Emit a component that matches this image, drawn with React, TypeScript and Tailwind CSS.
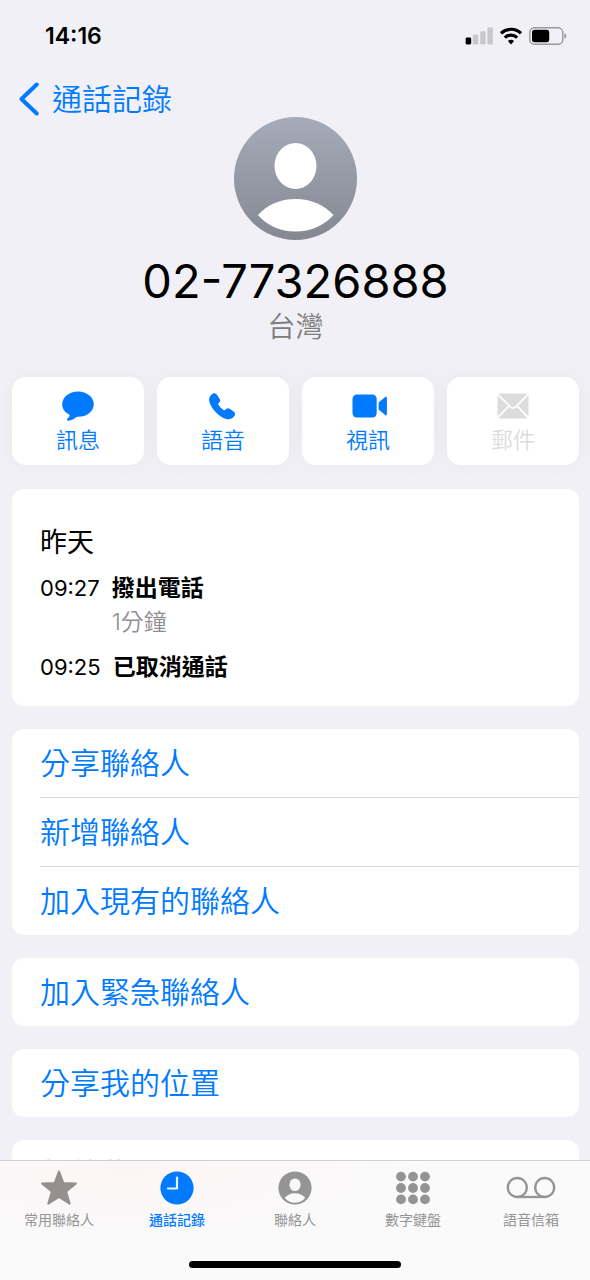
import { ReactNode } from 'react';

interface CallRecord {
  time: string;
  title: string;
  duration?: string;
}

const calls: CallRecord[] = [
  { time: '09:27', title: '撥出電話', duration: '1分鐘' },
  { time: '09:25', title: '已取消通話' },
];

const linkGroups = [
  ['分享聯絡人', '新增聯絡人', '加入現有的聯絡人'],
  ['加入緊急聯絡人'],
  ['分享我的位置'],
];

function StatusBar() {
  return (
    <div className="flex h-[72px] shrink-0 items-center justify-between pl-[45px] pr-[23px]">
      <span className="text-[23px] leading-7 font-semibold">14:16</span>
      <div className="flex items-center gap-[7px]">
        <svg width="28" height="18" viewBox="0 0 28 18" aria-hidden="true">
          <rect x="0.6" y="10.5" width="5.6" height="7" rx="1.4" fill="#000" />
          <rect x="7.8" y="7.5" width="5.4" height="10" rx="1.4" fill="#c8c7cc" />
          <rect x="15.2" y="4.3" width="5.4" height="13.2" rx="1.4" fill="#c8c7cc" />
          <rect x="22.4" y="0.4" width="5.4" height="17.1" rx="1.4" fill="#c8c7cc" />
        </svg>
        <svg width="22" height="18" viewBox="0 0 22 18" fill="none" stroke="#000" aria-hidden="true">
          <path d="M1 6.3a14.4 14.4 0 0 1 20 0" strokeWidth="3.2" />
          <path d="M4.8 10.6a9 9 0 0 1 12.4 0" strokeWidth="3.1" />
          <path d="M11 17.4l-3.1-3.3a4.6 4.6 0 0 1 6.2 0z" fill="#000" stroke="none" />
        </svg>
        <svg width="38" height="18" viewBox="0 0 38 18" aria-hidden="true">
          <rect x="0.8" y="0.8" width="33" height="16.4" rx="4.6" fill="none" stroke="#98979c" strokeWidth="1.4" />
          <rect x="3" y="2.8" width="17.2" height="12.4" rx="2.6" fill="#000" />
          <path d="M35.4 6.2c2.6 1 2.6 4.6 0 5.6z" fill="#98979c" />
        </svg>
      </div>
    </div>
  );
}

function Avatar() {
  return (
    <svg width="123" height="123" viewBox="0 0 123 123" role="img" aria-label="聯絡人">
      <defs>
        <linearGradient id="avatar-fill" x1="0" y1="0" x2="0" y2="1">
          <stop offset="0" stopColor="#a5abb9" />
          <stop offset="1" stopColor="#848891" />
        </linearGradient>
      </defs>
      <circle cx="61.5" cy="61.5" r="61.5" fill="url(#avatar-fill)" />
      <ellipse cx="61.5" cy="49" rx="21" ry="23" fill="#fff" />
      <path d="M24 98C33 88 46 82 61.5 82S90 88 99.5 98C90 108.5 77 114.5 61.5 114.5S33 108.5 24 98z" fill="#fff" />
    </svg>
  );
}

function MessageIcon() {
  return (
    <svg width="32" height="30" viewBox="0 0 32 30" fill="currentColor" aria-hidden="true">
      <path d="M16 0.5C7.2 0.5 0.2 6.2 0.2 13.2c0 4.6 2.7 8.2 7.2 10.5c0.5 0.3 0.5 0.7 0.2 1.2c-0.6 1-1.4 1.9-2.3 2.9c-0.8 0.9-0.2 2 1 1.9c3-0.4 6-2 8-3.5c0.5-0.4 0.9-0.4 1.7-0.4c8.8 0 15.8-5.5 15.8-12.6S24.8 0.5 16 0.5z" />
    </svg>
  );
}

function PhoneIcon() {
  return (
    <svg width="28" height="27" viewBox="0 0 28 27" fill="currentColor" aria-hidden="true">
      <path d="M2.6 1.4C4.4-0.2 6.8 0 8.1 1.9L10.6 5.700c0.900 1.400 0.700 2.600-0.200 3.600l-0.900 1c-0.500 0.600-0.400 1.100 0 1.700c1.400 1.900 3 3.500 4.900 4.900c0.600 0.400 1.100 0.500 1.700 0l1-0.900c1-0.900 2.300-1.100 3.600-0.200l3.900 2.600c1.800 1.200 2 3.500 0.400 5.200c-2.300 2.600-5.100 3.300-8.500 2.100C9.800 23.300 3.400 16.900 0.700 9.900C-0.500 6.500 0.200 3.700 2.600 1.400z" />
    </svg>
  );
}

function VideoIcon() {
  return (
    <svg width="39" height="24" viewBox="0 0 39 24" fill="currentColor" aria-hidden="true">
      <rect x="3.5" y="0.5" width="24.2" height="23" rx="4.5" />
      <path d="M29.6 8.6l6.3-5.4c1-0.9 2-0.6 2 0.800v16c0 1.400-1 1.700-2 0.800l-6.300-5.400z" />
    </svg>
  );
}

function MailIcon() {
  return (
    <svg width="32" height="26" viewBox="0 0 32 26" aria-hidden="true">
      <rect x="0.5" y="0.5" width="31" height="25" rx="2.5" fill="currentColor" />
      <path
        d="M0.5 1.2l13.3 12.9c1.4 1.3 3 1.3 4.4 0L31.5 1.2M0.5 24.8l11.5-12M31.5 24.8l-11.5-12"
        fill="none"
        stroke="#fff"
        strokeWidth="1.7"
      />
    </svg>
  );
}

interface ActionButtonProps {
  label: string;
  icon: ReactNode;
  disabled?: boolean;
}

function ActionButton({ label, icon, disabled }: ActionButtonProps) {
  return (
    <button
      type="button"
      disabled={disabled}
      className="flex flex-col items-center rounded-[14px] bg-white pt-[11px] pb-[9px] text-[#007aff] shadow-[0_0_20px_rgba(0,0,0,0.04)] disabled:text-[#dcdcde]"
    >
      <span className="flex h-9 items-center">{icon}</span>
      <span className="text-[22px] leading-8 font-[350]">{label}</span>
    </button>
  );
}

interface TabProps {
  label: string;
  icon: ReactNode;
  active?: boolean;
}

function Tab({ label, icon, active }: TabProps) {
  return (
    <a
      href="#"
      aria-current={active ? 'page' : undefined}
      className="flex flex-col items-center pt-[9px] text-[#949494] aria-[current=page]:font-medium aria-[current=page]:text-[#007aff]"
    >
      <span className="flex h-9 items-center">{icon}</span>
      <span className="mt-1 text-[14px] leading-5">{label}</span>
    </a>
  );
}

function StarIcon() {
  return (
    <svg width="38" height="36" viewBox="0 0 38 36" fill="#958f90" stroke="#958f90" strokeWidth="2" strokeLinejoin="round" aria-hidden="true">
      <path d="M19 1.4l4.4 11.700 12.600 0.400-9.900 8.100 3.600 12.100L19 26.800 8.300 33.700l3.600-12.100L2 13.500l12.600-0.400z" />
    </svg>
  );
}

function ClockIcon() {
  return (
    <svg width="34" height="34" viewBox="0 0 34 34" aria-hidden="true">
      <circle cx="17" cy="17" r="16.6" fill="currentColor" />
      <path d="M17 6.5V17.500H8" fill="none" stroke="#eaf4ff" strokeWidth="2.2" strokeLinecap="round" strokeLinejoin="round" />
    </svg>
  );
}

function PersonIcon() {
  return (
    <svg width="34" height="34" viewBox="0 0 34 34" aria-hidden="true">
      <circle cx="17" cy="17" r="16.6" fill="currentColor" />
      <ellipse cx="17" cy="13.8" rx="5.6" ry="6.3" fill="#f9f9f9" />
      <path d="M6.8 27C9 23.9 12.7 22.3 17 22.3S25 23.9 27.2 27C24.8 30 21 31.7 17 31.7S9.2 30 6.8 27z" fill="#f9f9f9" />
    </svg>
  );
}

function KeypadIcon() {
  const steps = [5, 17, 29];
  return (
    <svg width="34" height="34" viewBox="0 0 34 34" fill="currentColor" aria-hidden="true">
      {steps.map((y) => steps.map((x) => <circle key={`${x}-${y}`} cx={x} cy={17 + (y - 17) * 0.95} r="4.9" />))}
    </svg>
  );
}

function VoicemailIcon() {
  return (
    <svg width="50" height="24" viewBox="0 0 50 24" fill="none" stroke="currentColor" strokeWidth="2.3" aria-hidden="true">
      <circle cx="11.3" cy="11.5" r="9.5" />
      <circle cx="38.7" cy="11.5" r="9.5" />
      <path d="M11.3 21h27.4" />
    </svg>
  );
}

export default function App() {
  return (
    <div className="flex h-screen flex-col bg-[#f1f0f6] font-['Inter','Noto_Sans_CJK_TC',sans-serif] text-black">
      <StatusBar />

      <nav className="flex h-[45px] shrink-0 items-center pt-2 pl-[19px]">
        <a href="#" className="flex items-center gap-[13px] text-[30px] leading-9 font-[350] text-[#007aff]">
          <svg width="20" height="34" viewBox="0 0 20 34" fill="none" stroke="currentColor" strokeWidth="4" strokeLinecap="round" strokeLinejoin="round" aria-hidden="true">
            <path d="M17.7 2.5L2.5 17l15.2 14.5" />
          </svg>
          通話記錄
        </a>
      </nav>

      <main className="min-h-0 flex-1 overflow-hidden pr-[11px] pl-3">
        <header className="flex flex-col items-center">
          <Avatar />
          <h1 className="mt-[13px] text-[47px] leading-[56px]">02-77326888</h1>
          <p className="text-[28px] leading-9 font-[350] text-[#7c7c80]">台灣</p>
        </header>

        <div className="mt-8 grid grid-cols-4 gap-[13px]">
          <ActionButton label="訊息" icon={<MessageIcon />} />
          <ActionButton label="語音" icon={<PhoneIcon />} />
          <ActionButton label="視訊" icon={<VideoIcon />} />
          <ActionButton label="郵件" icon={<MailIcon />} disabled />
        </div>

        <section className="mt-6 rounded-xl bg-white px-7 pt-9 pb-[22px]">
          <h2 className="text-[27px] leading-[35px]">昨天</h2>
          {calls.map((call) => (
            <div key={call.time} className="mt-[11px] flex gap-3 text-[23px] leading-[34px]">
              <time className="text-[22px]">{call.time}</time>
              <div>
                <p className="font-bold">{call.title}</p>
                {call.duration && <p className="font-[350] text-[#8e8e93]">{call.duration}</p>}
              </div>
            </div>
          ))}
        </section>

        {linkGroups.map((group) => (
          <section key={group[0]} className="mt-[23px] divide-y divide-[#d9d9db] rounded-xl bg-white pl-7">
            {group.map((label) => (
              <button key={label} type="button" className="block min-h-[68px] w-full py-4 text-left text-[30px] leading-9 font-[350] text-[#007aff]">
                {label}
              </button>
            ))}
          </section>
        ))}

        <section className="mt-[23px] rounded-xl bg-white pl-7">
          <button type="button" className="block min-h-[68px] w-full py-4 text-left text-[30px] leading-9 font-[350] text-[#ff3b30]">
            封鎖此來電者
          </button>
        </section>
      </main>

      <footer className="shrink-0 border-t border-[#d0d0d3] bg-[#fafafb] bg-[radial-gradient(ellipse_at_22%_10%,#fdf5f5,#fafafb_45%)]">
        <nav className="grid grid-cols-5">
          <Tab label="常用聯絡人" icon={<StarIcon />} />
          <Tab label="通話記錄" icon={<ClockIcon />} active />
          <Tab label="聯絡人" icon={<PersonIcon />} />
          <Tab label="數字鍵盤" icon={<KeypadIcon />} />
          <Tab label="語音信箱" icon={<VoicemailIcon />} />
        </nav>
        <div className="mx-auto mt-[31px] mb-3 h-[7px] w-[36%] rounded-full bg-black" />
      </footer>
    </div>
  );
}
